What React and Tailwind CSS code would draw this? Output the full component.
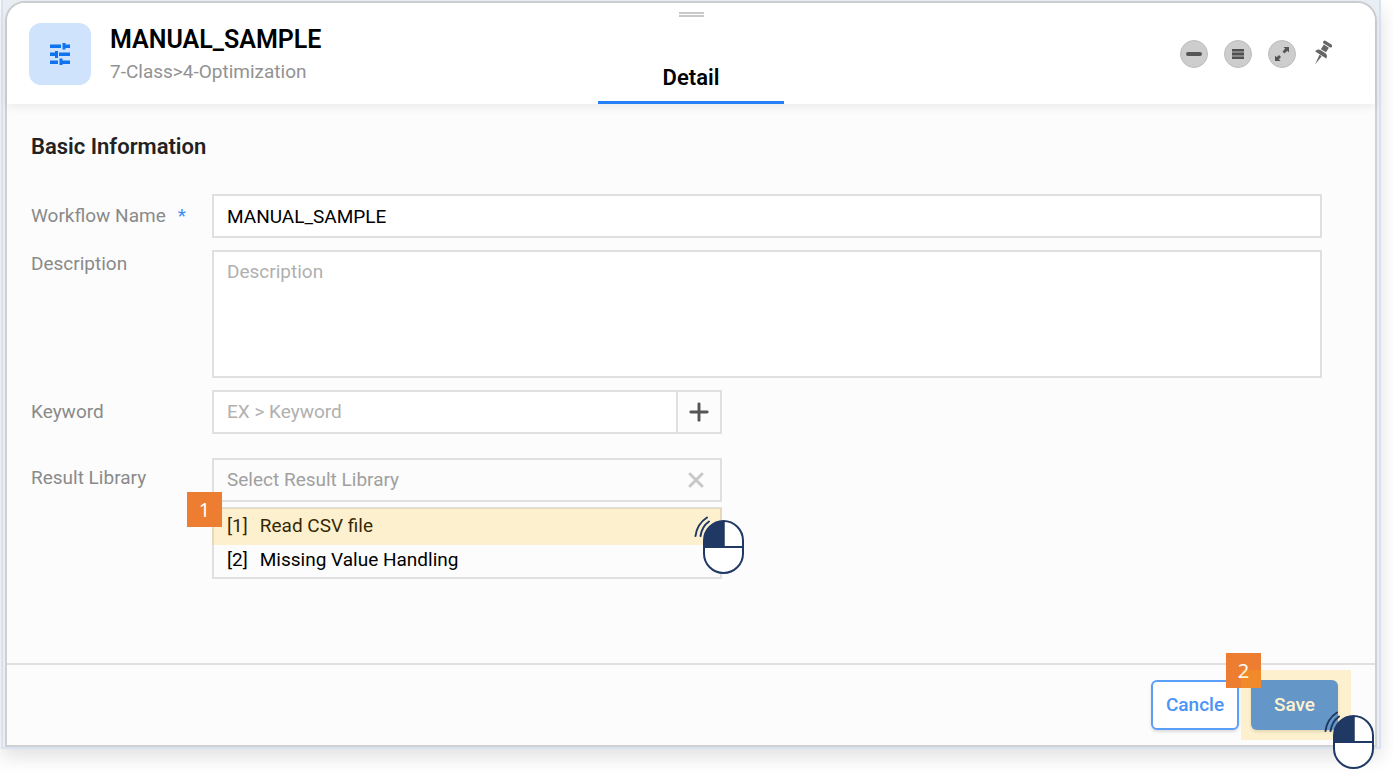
import React from "react";
import { Plus, X } from "lucide-react";

const results = ["Read CSV file", "Missing Value Handling"];

function TuneIcon() {
  return (
    <svg viewBox="0 0 20 22" className="h-[22px] w-5" fill="#0f73f0" aria-hidden="true">
      <path d="M0 1.500h11v3.500H0zM12.500 0h3v1.500H20V5h-4.500v1.500h-3zM9 9.500h11V13H9zM5 8h3v7H5v-2H0V9.500h5zM0 17.500h8V21H0zM9.500 15.500h3v2H20V21h-7.500v1h-3z" />
    </svg>
  );
}

function PinIcon() {
  return (
    <svg viewBox="0 0 20 28" className="h-7 w-5" aria-hidden="true">
      <g transform="rotate(32 10 14)" fill="#666">
        <rect x="4.500" y="1" width="10" height="3.200" rx="1.400" />
        <rect x="6.500" y="5" width="6" height="5.500" />
        <path d="M3 15.500c0-2.600 1.800-4 3.500-4h6c1.700 0 3.500 1.400 3.500 4z" />
        <path d="M8.300 16h2.600l-1.300 10.500z" />
      </g>
    </svg>
  );
}

function RoundButton({ label, children }) {
  return (
    <button
      type="button"
      aria-label={label}
      className="flex size-7 items-center justify-center rounded-full border border-[#bdbdbd] bg-[#cdcdcd]"
    >
      {children}
    </button>
  );
}

function MouseClick() {
  return (
    <svg viewBox="0 0 50 58" className="h-[58px] w-[50px]" fill="none" stroke="#1f3864" aria-hidden="true">
      <rect x="10" y="5" width="39" height="52" rx="19.500" fill="#fff" stroke="none" />
      <path d="M30 5h-.500A19.500 19.500 0 0 0 10 24.500V31h20z" fill="#1f3864" stroke="none" />
      <rect x="10" y="5" width="39" height="52" rx="19.500" strokeWidth="2" />
      <path d="M30 5v26" strokeWidth="1.500" />
      <path d="M10 31h39" strokeWidth="2" />
      <path d="M1.500 20C2.500 12 6 6 13 1.500M6.500 20C7.500 13.500 10 9 15 5.500" strokeWidth="2" strokeLinecap="round" />
    </svg>
  );
}

function Badge({ children }) {
  return (
    <span className="flex size-[35px] items-center justify-center bg-[#ed7d31] font-['Noto_Sans',sans-serif] text-xl font-normal text-white">
      {children}
    </span>
  );
}

function Field({ id, label, required, pad, children }) {
  return (
    <div className="flex items-start">
      <label htmlFor={id} className={`w-[181px] shrink-0 text-[#8a8a8a] ${pad}`}>
        {label}
        {required && <span className="ml-3 text-[#3d8df4]">*</span>}
      </label>
      {children}
    </div>
  );
}

export default function App() {
  return (
    <div className="min-h-[775px] bg-white pr-3 pl-px font-[Roboto,sans-serif] text-[19px] leading-6 font-normal text-black">
      <div className="border-x-2 border-b-2 border-[#d9e2f1] bg-[#e9edf4] px-0.5 pt-px shadow-[0_8px_18px_rgba(0,0,0,0.12)]">
        <main className="overflow-clip rounded-t-[20px] border-2 border-[#cfd0d2] bg-[#fcfcfc] [overflow-clip-margin:40px]">
          <header className="relative grid h-[101px] grid-cols-[1fr_auto_1fr] rounded-t-[18px] bg-white shadow-[0_3px_10px_rgba(0,0,0,0.07)]">
            <div className="flex items-start gap-[19px] pt-5 pl-[22px]">
              <span className="flex size-[62px] items-center justify-center rounded-xl bg-[#cfe3fc]">
                <TuneIcon />
              </span>
              <div>
                <h1 className="pt-px text-[25px] leading-8 font-semibold">MANUAL_SAMPLE</h1>
                <p className="pt-1 leading-6 text-[#929292]">7-Class&gt;4-Optimization</p>
              </div>
            </div>

            <div className="flex w-[186px] flex-col items-center justify-between pt-[9px]">
              <span className="h-[5px] w-[25px] border-y-2 border-[#c8c8c8]" />
              <button
                type="button"
                className="w-full border-b-[3px] border-[#2680f8] pb-[9px] text-[22px] leading-7 font-semibold"
              >
                Detail
              </button>
            </div>

            <div className="flex items-start justify-end gap-4 pt-[37px] pr-[43px]">
              <RoundButton label="Minimize">
                <span className="h-1 w-4 rounded-sm bg-[#555]" />
              </RoundButton>
              <RoundButton label="Default size">
                <span className="flex h-[10px] w-3 flex-col justify-between bg-[#858585]">
                  <span className="h-0.5 bg-[#505050]" />
                  <span className="h-0.5 bg-[#505050]" />
                  <span className="h-0.5 bg-[#505050]" />
                </span>
              </RoundButton>
              <RoundButton label="Maximize">
                <svg viewBox="0 0 16 16" className="size-4" fill="#555" aria-hidden="true">
                  <path d="M9.500 1H15v5.500l-1.700-1.700-2.800 2.700-2-2 2.700-2.800zM6.500 15H1V9.500l1.700 1.700 2.300-2.200 2 2-2.200 2.300z" />
                </svg>
              </RoundButton>
              <button type="button" aria-label="Pin panel" className="flex">
                <PinIcon />
              </button>
            </div>
          </header>

          <form onSubmit={(e) => e.preventDefault()}>
            <section className="h-[559px] pt-[29px] pr-[53px] pl-6">
              <h2 className="text-[22px] leading-7 font-semibold text-[#222]">Basic Information</h2>

              <div className="mt-[33px] flex flex-col gap-3">
                <Field id="name" label="Workflow Name" required pad="pt-[10px]">
                  <input
                    id="name"
                    defaultValue="MANUAL_SAMPLE"
                    className="h-11 min-w-0 flex-1 border-2 border-[#e0e0e0] bg-white px-[13px] outline-none"
                  />
                </Field>
                <Field id="description" label="Description" pad="pt-0.5">
                  <textarea
                    id="description"
                    placeholder="Description"
                    className="h-32 min-w-0 flex-1 resize-none border-2 border-[#e0e0e0] bg-white px-[13px] py-2 outline-none placeholder:text-[#b0b0b0]"
                  />
                </Field>
                <Field id="keyword" label="Keyword" pad="pt-[10px]">
                  <div className="flex h-11 w-[510px] border-2 border-[#e0e0e0]">
                    <input
                      id="keyword"
                      placeholder="EX > Keyword"
                      className="min-w-0 flex-1 bg-white px-[13px] outline-none placeholder:text-[#b0b0b0]"
                    />
                    <button
                      type="button"
                      aria-label="Add keyword"
                      className="flex w-11 items-center justify-center border-l-2 border-[#e0e0e0] text-[#555]"
                    >
                      <Plus size={28} strokeWidth={2.500} />
                    </button>
                  </div>
                </Field>
              </div>

              <div className="mt-6">
                <Field id="library" label="Result Library" pad="pt-2">
                  <div className="relative w-[510px]">
                    <div className="flex h-11 items-center border-2 border-[#e0e0e0]">
                      <input
                        id="library"
                        placeholder="Select Result Library"
                        className="min-w-0 flex-1 px-[13px] outline-none placeholder:text-[#a0a0a0]"
                      />
                      <button type="button" aria-label="Clear selection" className="mr-3 text-[#c8c8c8]">
                        <X size={24} strokeWidth={3} />
                      </button>
                    </div>
                    <ul className="mt-[5px] border-2 border-[#e0e0e0]">
                      {results.map((name, i) => (
                        <li key={name}>
                          <button type="button" className="flex h-[34px] w-full items-center gap-3 px-[13px] text-black">
                            <span>[{i + 1}]</span>
                            <span>{name}</span>
                          </button>
                        </li>
                      ))}
                    </ul>
                    <div className="pointer-events-none absolute inset-x-0 top-[50px] h-[37px] bg-[#ffbe14]/20" />
                    <div className="absolute top-[34px] -left-[25px]">
                      <Badge>1</Badge>
                    </div>
                    <div className="pointer-events-none absolute top-[58px] -right-[22px]">
                      <MouseClick />
                    </div>
                  </div>
                </Field>
              </div>
            </section>

            <footer className="flex h-[82px] items-start justify-end gap-3 border-t-2 border-[#e0e0e0] pt-[15px] pr-[37px]">
              <button
                type="button"
                className="h-[50px] w-[88px] rounded-md border-2 border-[#5c9ff8] bg-white font-medium text-[#4a93f7] shadow-[0_2px_3px_rgba(0,0,0,0.12)]"
              >
                Cancle
              </button>
              <div className="relative">
                <button
                  type="submit"
                  className="block h-[50px] w-[87px] rounded-md bg-[#3d8df4] font-medium text-white shadow-[0_2px_3px_rgba(0,0,0,0.12)]"
                >
                  Save
                </button>
                <div className="absolute -top-[27px] -left-[25px]">
                  <Badge>2</Badge>
                </div>
                <div className="pointer-events-none absolute -top-[10px] -left-[10px] h-[70px] w-[110px] bg-[#ffbe14]/20" />
                <div className="pointer-events-none absolute top-[31px] -right-[36px]">
                  <MouseClick />
                </div>
              </div>
            </footer>
          </form>
        </main>
      </div>
    </div>
  );
}
